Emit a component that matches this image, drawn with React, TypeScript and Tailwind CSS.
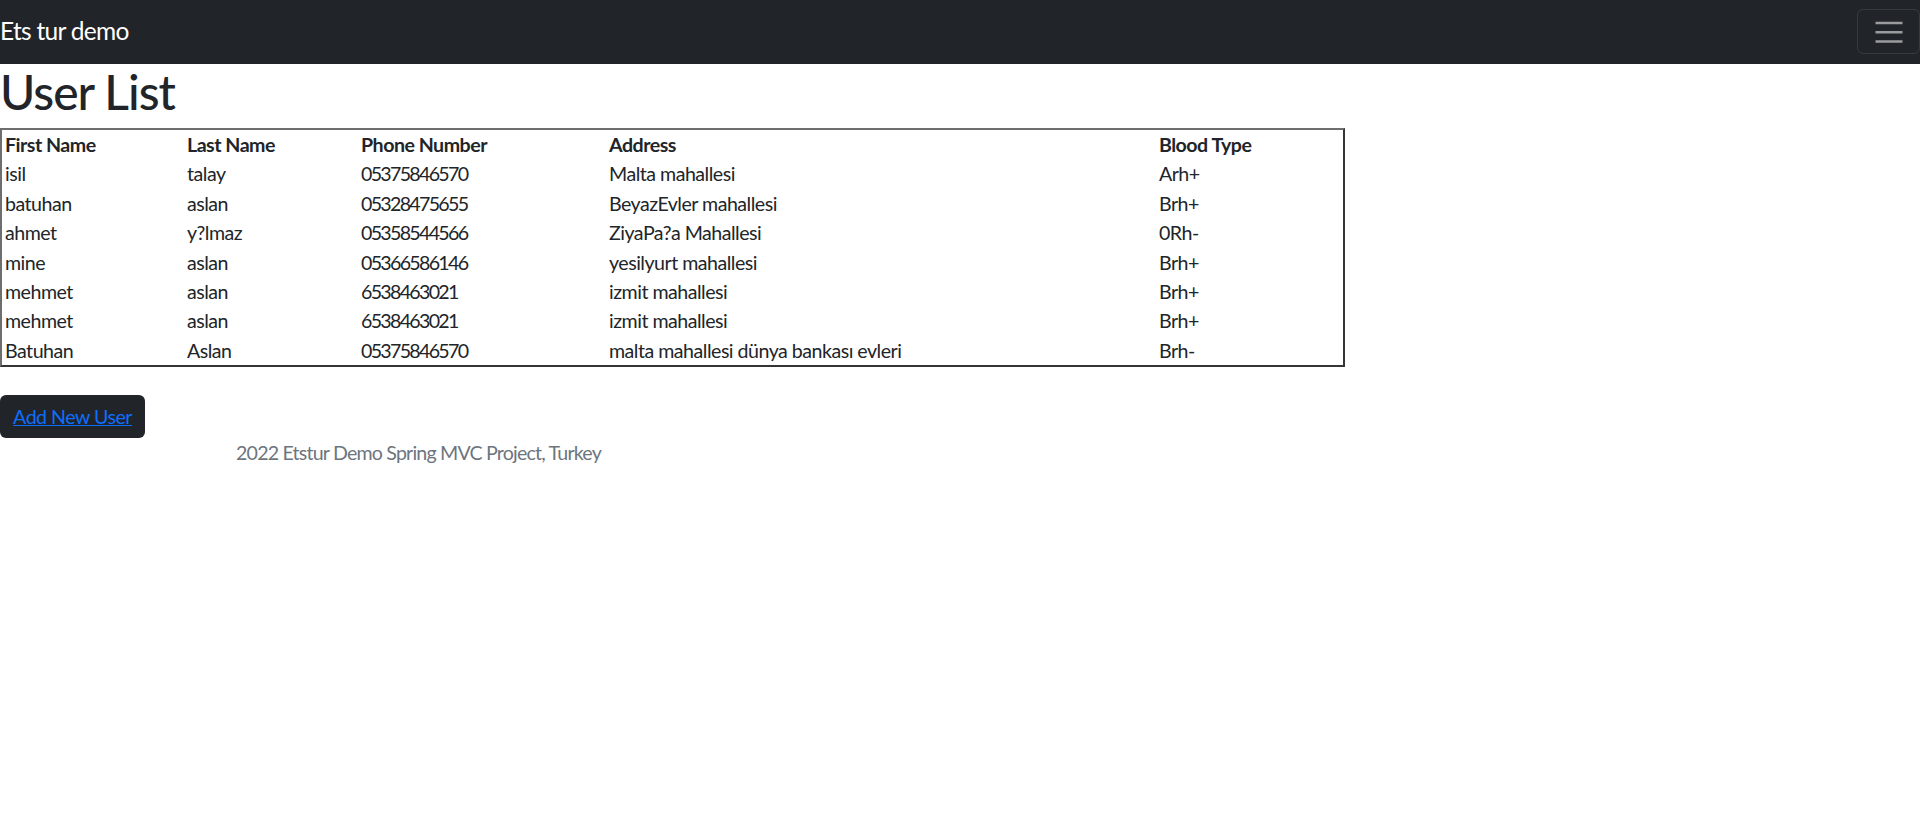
import React from "react";

const users = [
  ["isil", "talay", "05375846570", "Malta mahallesi", "Arh+"],
  ["batuhan", "aslan", "05328475655", "BeyazEvler mahallesi", "Brh+"],
  ["ahmet", "y?lmaz", "05358544566", "ZiyaPa?a Mahallesi", "0Rh-"],
  ["mine", "aslan", "05366586146", "yesilyurt mahallesi", "Brh+"],
  ["mehmet", "aslan", "6538463021", "izmit mahallesi", "Brh+"],
  ["mehmet", "aslan", "6538463021", "izmit mahallesi", "Brh+"],
  ["Batuhan", "Aslan", "05375846570", "malta mahallesi dünya bankası evleri", "Brh-"],
];

const headers = ["First Name", "Last Name", "Phone Number", "Address", "Blood Type"];

export default function App() {
  return (
    <div
      className="min-h-[816px] bg-white text-[#212529] tracking-[-0.5px]"
      style={{ fontFamily: "Lato, 'Noto Sans', 'Open Sans', sans-serif" }}
    >
      <nav className="h-[64px] bg-[#212529] flex items-center justify-between">
        <span className="text-white text-[24.5px] leading-[30px] pb-[2px] tracking-[-0.7px]">Ets tur demo</span>
        <button className="w-[63px] h-[45px] mb-[1px] rounded-[6px] border border-[rgba(255,255,255,0.1)] flex items-center justify-center">
          <svg width="28" height="24" viewBox="0 0 28 24" fill="none">
            <path d="M0.5 3h27M0.5 12.3h27M0.5 21.5h27" stroke="rgba(255,255,255,0.55)" strokeWidth="2.5" />
          </svg>
        </button>
      </nav>

      <h1 className="h-[64px] text-[48px] leading-[56px] font-medium tracking-[-1px]">User List</h1>

      <div className="w-[1345px] border-2 border-t-[#6e6e6e] border-l-[#6e6e6e] border-r-[#353535] border-b-[#353535] text-[19.6px] leading-[29.4px]">
        <div className="grid grid-cols-[182px_174px_248px_550px_1fr] font-bold">
          {headers.map((h) => (
            <div key={h} className="pl-[3px] whitespace-nowrap">{h}</div>
          ))}
        </div>
        {users.map((u, i) => (
          <div key={i} className="grid grid-cols-[182px_174px_248px_550px_1fr]">
            {u.map((c, j) => (
              <div key={j} className={j === 2 ? "pl-[3px] whitespace-nowrap tracking-[-1.7px]" : "pl-[3px] whitespace-nowrap"}>{c}</div>
            ))}
          </div>
        ))}
      </div>

      <div className="mt-[28px] w-[145px] h-[43px] rounded-[6px] bg-[#212529] flex items-center justify-center">
        <a href="#" className="text-[#0d6efd] underline text-[19.6px] leading-[29.4px]">Add New User</a>
      </div>

      <p className="pl-[236px] text-[#6c757d] text-[19.6px] leading-[29.4px] tracking-[-0.8px]">
        2022 Etstur Demo Spring MVC Project, Turkey
      </p>
    </div>
  );
}
